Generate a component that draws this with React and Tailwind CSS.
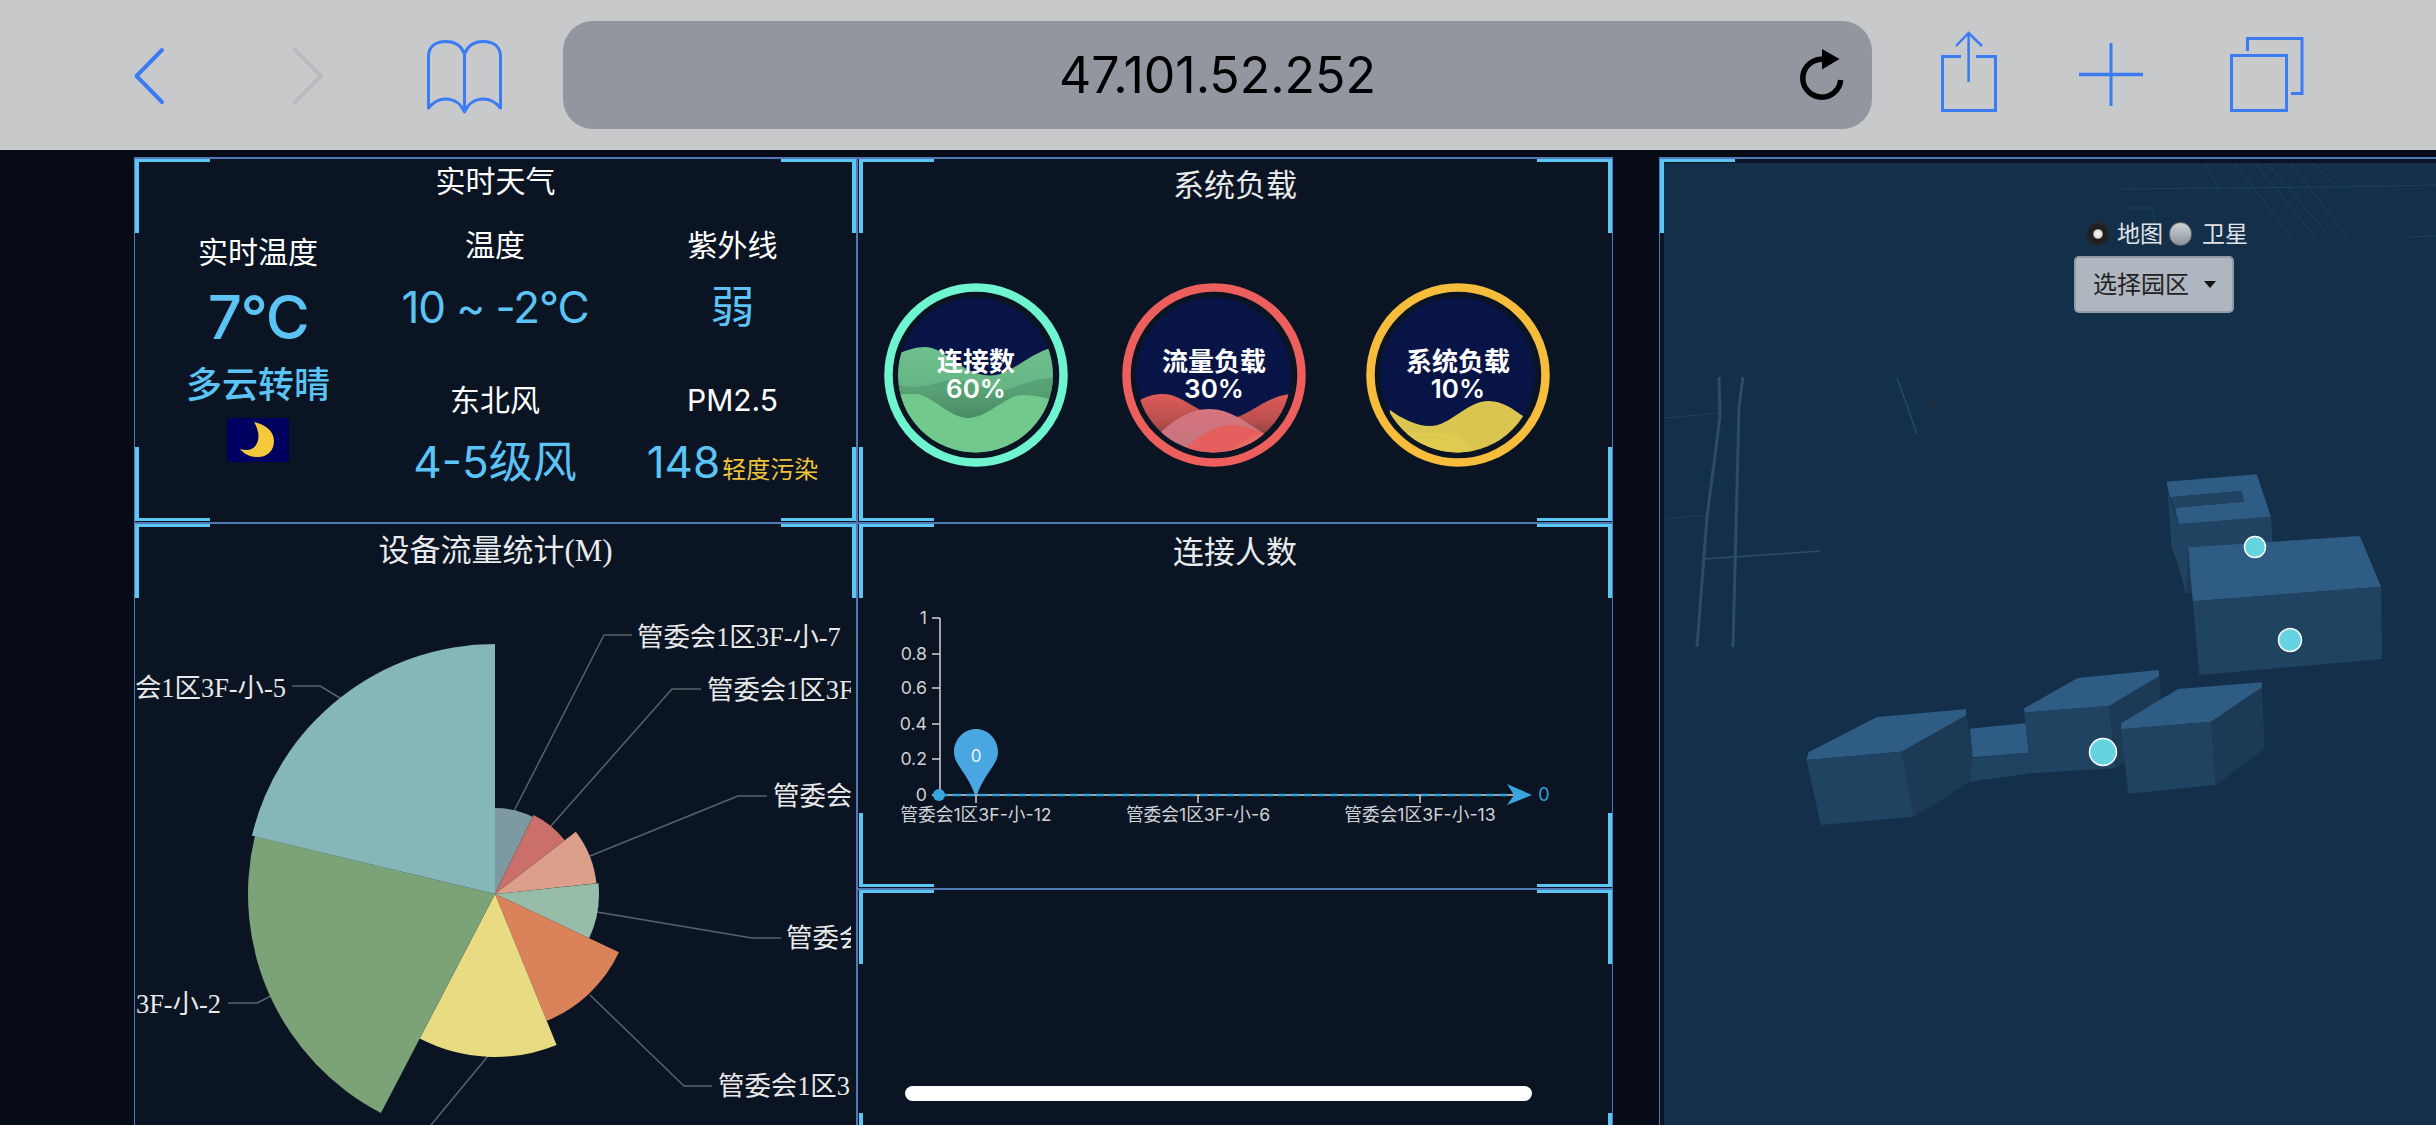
import React from "react";

const blue = "#3b7cf5";

function HeaderIcon({ x, w, ml, children }) {
  return (
    <svg width={w} height={150} viewBox={`${x} 0 ${w} 150`} fill="none" stroke={blue} className="shrink-0 block" style={{ marginLeft: ml }}>
      {children}
    </svg>
  );
}

function Corners({ mid }) {
  const c = "absolute w-[75px] h-[74px] border-[#5bc6f4] pointer-events-none z-10";
  const l = mid ? "left-[1px]" : "left-0";
  return (
    <>
      <div className={`${c} ${l} top-0 border-l-4 border-t-[3px]`} />
      <div className={`${c} right-0 top-0 border-r-4 border-t-[3px]`} />
      <div className={`${c} ${l} bottom-[1px] border-l-4 border-b-[3px]`} />
      <div className={`${c} right-0 bottom-[1px] border-r-4 border-b-[3px]`} />
    </>
  );
}

function Panel({ className, mid, children }) {
  return (
    <section className={`relative shrink-0 bg-[#0a1423] border-x border-t-2 border-[#4f78b4] ${className}`}>
      <Corners mid={mid} />
      {children}
    </section>
  );
}

const sans = "font-['Inter','Noto_Sans_CJK_SC',sans-serif]";

function WeatherCell({ label, children }) {
  return (
    <div className="flex flex-col items-center">
      <div className="h-[40px] flex items-center text-[30px] leading-none text-white whitespace-nowrap">{label}</div>
      <div className="h-[84px] flex items-center text-[#5bc4f5] text-[44px] leading-none whitespace-nowrap">{children}</div>
    </div>
  );
}

function Gauge({ ring, label, value, id, ml, children }) {
  return (
    <div className="relative w-[184px] h-[184px] shrink-0" style={{ marginLeft: ml }}>
      <svg width="184" height="184" viewBox="0 0 184 184" className="block">
        <defs>
          <clipPath id={id}><circle cx="91.500" cy="92" r="77.500" /></clipPath>
        </defs>
        <circle cx="92" cy="92" r="87.500" fill="none" stroke={ring} strokeWidth="8.500" />
        <circle cx="91.500" cy="92" r="77.500" fill="#081446" />
        <g clipPath={`url(#${id})`}>{children}</g>
      </svg>
      <div className="absolute inset-0 flex flex-col items-center justify-center text-white font-semibold text-[26px] leading-[27px]">
        <span>{label}</span>
        <span>{value}</span>
      </div>
    </div>
  );
}

function polar(r, deg) {
  const a = (deg * Math.PI) / 180;
  return [495 + r * Math.sin(a), 894 - r * Math.cos(a)];
}
function sector(r, a0, a1) {
  const [x0, y0] = polar(r, a0);
  const [x1, y1] = polar(r, a1);
  const large = a1 - a0 > 180 ? 1 : 0;
  return `M495 894L${x0} ${y0}A${r} ${r} 0 ${large} 1 ${x1} ${y1}Z`;
}

const slices = [
  [86, 0, 26, "#7d9aa2"],
  [88, 26, 52.4, "#cb6f6a"],
  [102, 52.4, 84, "#dca08a"],
  [104, 84, 115.2, "#97bda9"],
  [137, 115.2, 157.8, "#da825a"],
  [163, 157.8, 207.5, "#e8db82"],
  [247, 207.5, 283.5, "#7ca277"],
  [250, 283.5, 360, "#85b6ba"],
];

const leaders = [
  "514,811 604,635 632,635",
  "550,827 672,689 701,689",
  "590,856 738,796 767,796",
  "597,912 752,938 781,938",
  "590,995 684,1086 712,1086",
  "488,1056 431,1125",
  "340,698 320,686 292,686",
  "271,996 257,1003 228,1003",
];

const labels = [
  [637, 646, "管委会1区3F-小-7", "start"],
  [707, 699, "管委会1区3F-小-8", "start"],
  [773, 805, "管委会1区3F-小-9", "start"],
  [786, 947, "管委会1区3F-小-1", "start"],
  [718, 1095, "管委会1区3F-小-3", "start"],
  [286, 697, "会1区3F-小-5", "end"],
  [221, 1013, "3F-小-2", "end"],
];

const roads = [
  ["1719,377 1720,417 1707,517 1697,647", 3],
  ["1743,377 1739,407 1733,647", 3],
  ["1704,559 1820,551", 1.5],
  ["1664,418 1719,413", 1],
  ["1664,519 1706,515", 1],
  ["1897,378 1906,403 1917,434", 1.2],
  ["2204,163 2219,188", 1],
  ["2122,189 2219,188 2338,187 2436,185", 1],
  ["2234,163 2292,237", 1],
  ["2255,163 2315,237", 1],
  ["2267,163 2330,237", 1],
  ["2290,163 2348,237", 1],
  ["2312,163 2338,187", 1],
  ["2409,237 2436,236", 1],
  ["2127,208 2152,208 2155,223", 1],
];

const top = "#2f5c84";
const front = "#204361";
const side = "#1c3a55";
const faces = [
  [front, "1040,160 1062,252 1243,230 1246,305 1080,322 1087,458 1075,458 1060,375 1047,320"],
  [top, "1037,125 1215,103 1243,230 1062,252 1053,203 1190,185 1185,153 1044,172"],
  [front, "1044,172 1185,153 1190,185 1053,203"],
  [side, "1080,322 1089,484 1087,458 1075,458"],
  [top, "1080,322 1418,288 1460,440 1089,484"],
  [front, "1089,484 1460,440 1462,657 1102,705"],
  [top, "650,866 760,849 766,938 655,952"],
  [front, "644,955 766,938 770,1000 650,1025"],
  [side, "515,935 643,825 655,935 650,1025 540,1130"],
  [top, "332,937 467,831 642,808 643,825 515,935 328,960"],
  [front, "328,960 515,935 540,1130 356,1155"],
  [side, "924,798 1023,708 1027,800 1027,900 950,970 937,985"],
  [top, "757,805 862,714 1022,690 1023,708 924,798 757,818"],
  [front, "757,818 924,798 937,985 770,1000"],
  [side, "1125,845 1225,742 1231,925 1134,1035"],
  [top, "948,850 1060,747 1225,727 1225,742 1125,845 948,868"],
  [front, "948,868 1125,845 1134,1035 962,1061"],
];

export default function App() {
  return (
    <div className={`relative w-[2436px] h-[1125px] overflow-hidden bg-[#060b17] ${sans}`}>
      <header className="flex h-[150px] bg-[#c8c9cb]">
        <HeaderIcon x={130} w={38} ml={130}>
          <path d="M162 50L136.500 76L162 102" strokeWidth="4" strokeLinecap="round" strokeLinejoin="round" />
        </HeaderIcon>
        <HeaderIcon x={289} w={39} ml={121}>
          <path d="M295 50L321 76L295 102" stroke="#b8babd" strokeWidth="4" strokeLinecap="round" strokeLinejoin="round" />
        </HeaderIcon>
        <HeaderIcon x={422} w={85} ml={94}>
          <path d="M464.500 54C461 45 454 41.500 446 41.500C435 41.500 428.500 47 428.500 57V108C434 101 440 99 446 99C454 99 461 104 464.500 112C468 104 475 99 483 99C489 99 495 101 500.500 108V57C500.500 47 494 41.500 483 41.500C475 41.500 468 45 464.500 54V112" strokeWidth="3" strokeLinejoin="round" />
        </HeaderIcon>
        <div className="relative shrink-0 ml-[56px] mt-[21px] w-[1309px] h-[108px] rounded-[30px] bg-[#92969e] flex items-center justify-center">
          <span className="text-[50px] leading-none text-black">47.101.52.252</span>
          <svg width="60" height="70" viewBox="1792 40 60 70" fill="none" className="absolute left-[1229px] top-[19px]">
            <path d="M1824 59.300A19 19 0 1 0 1840.700 80" stroke="#000" strokeWidth="5.500" />
            <path d="M1822 49L1839.500 59L1822 69.500Z" fill="#000" />
          </svg>
        </div>
        <HeaderIcon x={1935} w={68} ml={63}>
          <path d="M1961 56.500H1942.500V110.500H1995.500V56.500H1976" strokeWidth="3" />
          <path d="M1968.600 82V33M1956 46L1968.600 33L1982 46" strokeWidth="2.500" />
        </HeaderIcon>
        <HeaderIcon x={2075} w={72} ml={72}>
          <path d="M2079 74.500H2143" strokeWidth="3.500" />
          <path d="M2111 43V106" strokeWidth="3" />
        </HeaderIcon>
        <HeaderIcon x={2225} w={84} ml={78}>
          <rect x="2231.500" y="55.500" width="55" height="55" strokeWidth="3" />
          <path d="M2247.500 51V38.500H2302V93.500H2291" strokeWidth="3" />
        </HeaderIcon>
      </header>

      <main className="flex items-start pl-[134px] pt-[7px]">
        <div className="flex flex-col w-[723px] shrink-0">
          <Panel className="h-[365px]">
            <h2 className="h-[44px] flex items-center justify-center text-[30px] font-normal text-white">实时天气</h2>
            <div className="flex">
              <div className="w-[246px] flex flex-col items-center pt-[29px]">
                <div className="h-[40px] flex items-center text-[30px] leading-none text-white">实时温度</div>
                <div className="h-[90px] flex items-center text-[60px] leading-none font-medium tracking-[-1.500px] text-[#5bc4f5]">7°C</div>
                <div className="h-[46px] flex items-center text-[36px] leading-none font-medium text-[#5bc4f5]">多云转晴</div>
                <svg width="62" height="44" viewBox="0 0 62 44" className="mt-[10px] rounded-[3px] bg-[#000060] block">
                  <path d="M27 4C40 7 47 14 47 23C47 33 40 39 31 39C23 39 17 36 13 31C20 33 26 32 29 27C33 21 32 12 27 4Z" fill="#f5c93a" />
                </svg>
              </div>
              <div className="w-[228px] flex flex-col items-center pt-[22px] gap-[31px]">
                <WeatherCell label="温度"><span className="tracking-[-1.100px]">10 ~ -2°C</span></WeatherCell>
                <WeatherCell label="东北风">4-5级风</WeatherCell>
              </div>
              <div className="w-[247px] flex flex-col items-center pt-[22px] gap-[31px]">
                <WeatherCell label="紫外线">弱</WeatherCell>
                <WeatherCell label="PM2.5">
                  <span className="pr-[2px]">148</span>
                  <span className="text-[24px] text-[#f0c53a] mt-[16px]">轻度污染</span>
                </WeatherCell>
              </div>
            </div>
          </Panel>
          <Panel className="h-[700px]">
            <h2 className="h-[58px] pb-[4px] flex items-center justify-center text-[31px] font-normal text-[#e8eaec] font-['Liberation_Serif','Noto_Sans_CJK_SC',serif]">设备流量统计(M)</h2>
            <svg width="721" height="543" viewBox="135 582 721 543" className="block">
              <defs>
                <clipPath id="pieclip"><rect x="135" y="582" width="716" height="543" /></clipPath>
              </defs>
              {leaders.map((p) => (
                <polyline key={p} points={p} fill="none" stroke="#59626a" strokeWidth="1.500" strokeLinejoin="round" />
              ))}
              {slices.map(([r, a, b, c]) => (
                <path key={c} d={sector(r, a, b)} fill={c} />
              ))}
              <g clipPath="url(#pieclip)" fontSize="26.400" fill="#e8e8e8" className="font-['Liberation_Serif','Noto_Sans_CJK_SC',serif]">
                {labels.map(([x, y, t, anchor]) => (
                  <text key={t} x={x} y={y} textAnchor={anchor}>{t}</text>
                ))}
              </g>
            </svg>
          </Panel>
        </div>

        <div className="flex flex-col w-[756px] shrink-0">
          <Panel mid className="h-[365px]">
            <h2 className="h-[52px] flex items-center justify-center text-[31px] font-normal text-[#e8eaec]">系统负载</h2>
            <div className="flex mt-[72px]">
              <Gauge ring="#6ef5d0" label="连接数" value="60%" id="g1" ml={26}>
                <defs>
                  <linearGradient id="gg" x1="0" y1="0" x2="0" y2="1">
                    <stop offset="0" stopColor="#6fc08c" />
                    <stop offset="0.4" stopColor="#66b484" />
                    <stop offset="0.7" stopColor="#427f5c" />
                    <stop offset="1" stopColor="#4a9a68" />
                  </linearGradient>
                </defs>
                <path d="M0 78C15 70 28 64 41 64C60 64 75 88 100 92C125 96 140 72 170 64V170H0Z" fill="url(#gg)" />
                <path d="M0 96C25 108 40 104 60 98C80 92 100 112 125 106C140 102 155 92 184 96V150H0Z" fill="#4c9468" opacity="0.55" />
                <path d="M0 113C10 111 20 111 33 111C50 114 66 135 84 135C104 135 122 112 139 112C150 112 158 114 184 120V184H0Z" fill="#72c98d" />
              </Gauge>
              <Gauge ring="#ec5f5c" label="流量负载" value="30%" id="g2" ml={54}>
                <defs>
                  <linearGradient id="gr" x1="0" y1="0" x2="0" y2="1">
                    <stop offset="0" stopColor="#de5c58" />
                    <stop offset="0.55" stopColor="#b94f4e" />
                    <stop offset="1" stopColor="#6e3839" />
                  </linearGradient>
                  <linearGradient id="gp" x1="0" y1="0" x2="0" y2="1">
                    <stop offset="0" stopColor="#d8747e" />
                    <stop offset="1" stopColor="#b9767e" />
                  </linearGradient>
                </defs>
                <path d="M10 122C22 114 30 111 41 111C62 111 82 136 105 136C125 136 142 113 170 111V160H10Z" fill="url(#gr)" />
                <path d="M39 149C52 137 68 126 87 126C108 126 125 140 141 150L120 184H50Z" fill="url(#gp)" />
                <path d="M65 163C78 152 95 142 108 142C120 142 132 146 141 150C150 152 155 152 170 150V184H55Z" fill="#e45f5e" />
                <path d="M108 167C118 160 130 153 141 150L150 184H100Z" fill="#e86a66" />
              </Gauge>
              <Gauge ring="#f6bc3c" label="系统负载" value="10%" id="g3" ml={60}>
                <path d="M24 127C35 135 50 143 64 143C85 143 100 118 123 118C137 118 148 127 157 133L160 184H20Z" fill="#d9c550" />
                <path d="M30 150C45 150 60 150 78 150C95 150 105 165 115 184H40Z" fill="#dfcb50" />
              </Gauge>
            </div>
          </Panel>
          <Panel mid className="h-[366px]">
            <h2 className="h-[58px] pb-[2px] flex items-center justify-center text-[31px] font-normal text-[#e8eaec]">连接人数</h2>
            <svg width="754" height="306" viewBox="858 582 754 306" className="block">
              <path d="M940 618V795H1525M932 618H940M932 654H940M932 688H940M932 724H940M932 759H940M932 795H940M976 795V803M1198 795V803M1420 795V803" fill="none" stroke="#d4d4d4" strokeWidth="1.500" />
              <path d="M940 795H1510" stroke="#2f9fd8" strokeWidth="2.500" strokeDasharray="8 5" />
              <path d="M1507 784L1532 795L1507 805L1514 795Z" fill="#3aa4df" />
              <circle cx="939" cy="795" r="6" fill="#3aa4df" />
              <path d="M976 729C988 729 998 739 998 752C998 765 985 772 977 795H975C967 772 954 765 954 752C954 739 964 729 976 729Z" fill="#4aa6e0" />
              <g fill="#cfd2d4" fontSize="17.700">
                {[["1", 618], ["0.8", 654], ["0.6", 688], ["0.4", 724], ["0.2", 759], ["0", 795]].map(([t, y]) => (
                  <text key={t} x="927" y={y + 6} textAnchor="end">{t}</text>
                ))}
                <text x="976" y="821" textAnchor="middle">管委会1区3F-小-12</text>
                <text x="1198" y="821" textAnchor="middle">管委会1区3F-小-6</text>
                <text x="1420" y="821" textAnchor="middle">管委会1区3F-小-13</text>
              </g>
              <text x="976" y="762" textAnchor="middle" fontSize="17" fill="#e8f4fb">0</text>
              <text x="1544" y="801" textAnchor="middle" fontSize="18" fill="#2f9fd8">0</text>
            </svg>
          </Panel>
          <Panel mid className="h-[300px]" />
        </div>

        <section className="relative ml-[46px] flex-1 h-[968px] bg-[#0a1423] border-l border-t-2 border-[#4f78b4] pl-[4px] pt-[4px]">
          <div className="absolute left-0 top-0 w-[75px] h-[74px] border-l-4 border-t-[3px] border-[#5bc6f4] z-10" />
          <div className="relative h-full bg-[#142f49]">
            <svg width="772" height="962" viewBox="1664 163 772 962" className="block">
              {roads.map(([p, w]) => (
                <polyline key={p} points={p} fill="none" stroke="#2b4f62" strokeWidth={w} opacity={w > 1.1 ? 1 : 0.55} />
              ))}
              <path d="M1928 398L1939 407L1934 412Z" fill="#1f2e42" />
              <g transform="translate(1640 440) scale(0.5076 0.3333)">
                {faces.map(([c, p]) => (
                  <polygon key={p} points={p} fill={c} />
                ))}
              </g>
              <g fill="#65d4e0" stroke="#fff" strokeWidth="1.500">
                <circle cx="2255" cy="547" r="10.500" />
                <circle cx="2290" cy="640" r="11.500" />
                <circle cx="2103" cy="752" r="13.500" />
              </g>
            </svg>
            <div className="absolute left-[423px] top-[59px] flex items-center text-[23px] leading-none text-[#e0e4e8]">
              <span className="w-[22px] h-[24px] rounded-full bg-[radial-gradient(circle,#ffffff_0%,#dddddd_24%,#1c1c1c_34%,#222222_65%,#5a5a5a_100%)]" />
              <span className="ml-[8px]">地图</span>
              <span className="ml-[6px] w-[23px] h-[24px] rounded-full bg-[linear-gradient(#cfd4d9,#8b929b)] border border-[#666]" />
              <span className="ml-[10px]">卫星</span>
            </div>
            <div className="absolute left-[410px] top-[93px] w-[160px] h-[57px] rounded-[5px] bg-[#aeb6c0] border-2 border-[#8f9aa6] flex items-center pl-[17px] text-[24px] leading-none text-[#222]">
              <span>选择园区</span>
              <span className="ml-[15px] w-0 h-0 border-x-[6.500px] border-x-transparent border-t-[7px] border-t-[#111]" />
            </div>
          </div>
        </section>
      </main>

      <div className="absolute left-[905px] top-[1086px] w-[627px] h-[15px] rounded-full bg-white z-20" />
    </div>
  );
}
